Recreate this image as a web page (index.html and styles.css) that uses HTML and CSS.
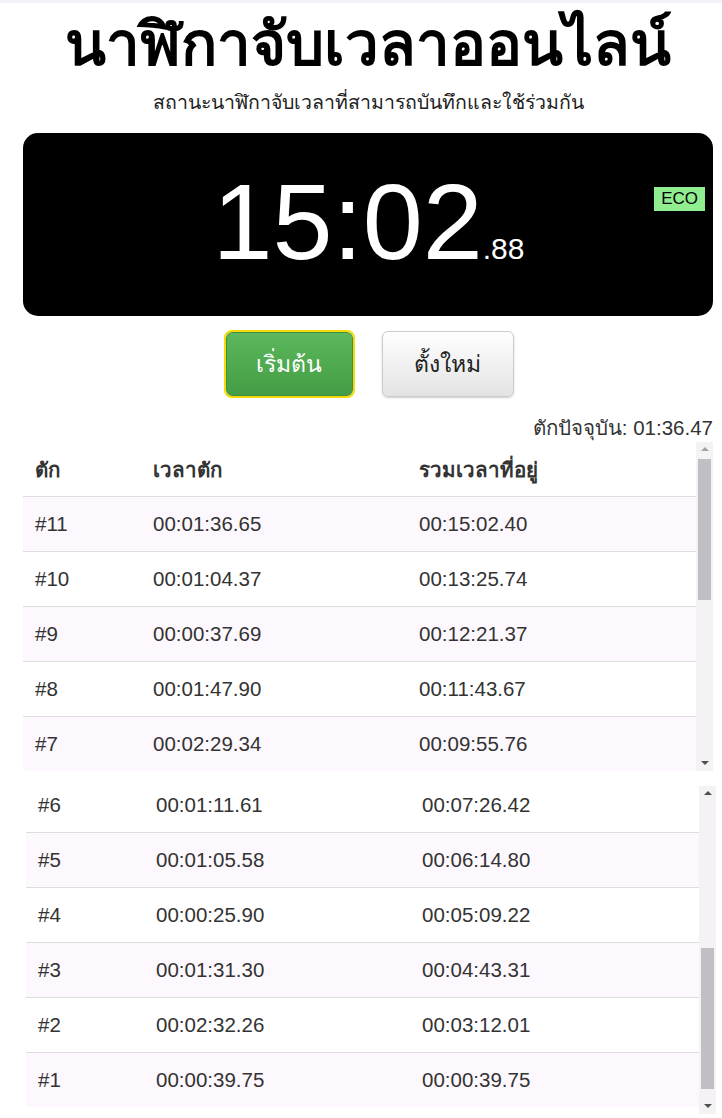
FILE: index.html
```html
<!DOCTYPE html>
<html lang="th">
<head>
    <meta charset="UTF-8">
    <meta name="viewport" content="width=device-width, initial-scale=1.0">
    <title>นาฬิกาจับเวลาออนไลน์</title>
    <link rel="stylesheet" href="styles.css">
</head>
<body>
    <div class="topbar"></div>
    <div class="page">
        <h1>นาฬิกาจับเวลาออนไลน์</h1>
        <p class="subtitle">สถานะนาฬิกาจับเวลาที่สามารถบันทึกและใช้ร่วมกัน</p>

        <div class="clock">
            <span class="time">15:02</span><span class="ms">.88</span>
            <span class="eco">ECO</span>
        </div>

        <div class="controls">
            <button class="btn btn-start">เริ่มต้น</button>
            <button class="btn btn-reset">ตั้งใหม่</button>
        </div>

        <div class="current-lap">ตักปัจจุบัน: 01:36.47</div>

        <div class="laps">
            <div class="laps-view" id="lapsTop"></div>
            <div class="scrollbar">
                <div class="arrow arrow-up"></div>
                <div class="track"><div class="thumb thumb-top"></div></div>
                <div class="arrow arrow-down"></div>
            </div>
        </div>

        <div class="laps laps-bottom">
            <div class="laps-view" id="lapsBottom"></div>
            <div class="scrollbar">
                <div class="arrow arrow-up"></div>
                <div class="track"><div class="thumb thumb-bottom"></div></div>
                <div class="arrow arrow-down"></div>
            </div>
        </div>
    </div>

    <script>
        const laps = [
            ['#11', '00:01:36.65', '00:15:02.40'],
            ['#10', '00:01:04.37', '00:13:25.74'],
            ['#9', '00:00:37.69', '00:12:21.37'],
            ['#8', '00:01:47.90', '00:11:43.67'],
            ['#7', '00:02:29.34', '00:09:55.76'],
            ['#6', '00:01:11.61', '00:07:26.42'],
            ['#5', '00:01:05.58', '00:06:14.80'],
            ['#4', '00:00:25.90', '00:05:09.22'],
            ['#3', '00:01:31.30', '00:04:43.31'],
            ['#2', '00:02:32.26', '00:03:12.01'],
            ['#1', '00:00:39.75', '00:00:39.75']
        ];

        function buildTable(box) {
            let html = '<table><thead><tr><th class="c1">ตัก</th><th class="c2">เวลาตัก</th><th>รวมเวลาที่อยู่</th></tr></thead><tbody>';
            laps.forEach(function (lap) {
                html += '<tr><td>' + lap[0] + '</td><td>' + lap[1] + '</td><td>' + lap[2] + '</td></tr>';
            });
            html += '</tbody></table>';
            box.innerHTML = html;
        }

        buildTable(document.getElementById('lapsTop'));
        const bottom = document.getElementById('lapsBottom');
        buildTable(bottom);
        bottom.scrollTop = bottom.scrollHeight; // show the oldest laps
    </script>
</body>
</html>
```

FILE: styles.css
```css
body {
    font-family: "Liberation Sans", Arial, sans-serif;
    color: #333;
    background: #fff;
    margin: 0;
}

.topbar {
    height: 3px;
    background-color: #f3f1f5;
}

.page {
    padding: 0 9px 0 23px;
}

h1 {
    font-size: 60px;
    font-weight: bold;
    color: #000;
    text-align: center;
    margin: 2px 0 0;
    line-height: 80px;
}

.subtitle {
    text-align: center;
    font-size: 19.5px;
    color: #222;
    margin: 2px 0 15px;
}

/* Clock face */
.clock {
    position: relative;
    background-color: #000;
    color: #fff;
    border-radius: 15px;
    height: 183px;
    display: flex;
    justify-content: center;
    align-items: baseline;
}

.time {
    font-size: 108px;
    line-height: 178px;
    margin-left: 1px;
}

.ms {
    font-size: 30px;
}

.eco {
    position: absolute;
    top: 54px;
    right: 8px;
    background-color: #90ee90;
    color: #000;
    font-size: 17px;
    line-height: 24px;
    padding: 0 7px;
}

/* Buttons */
.controls {
    display: flex;
    justify-content: center;
    gap: 29px;
    margin-top: 15px;
    padding-left: 3px;
}

.btn {
    width: 132px;
    height: 66px;
    border-radius: 6px;
    font-family: inherit;
    font-size: 23px;
    cursor: pointer;
}

.btn-start {
    color: #fff;
    background: linear-gradient(#5cb85c, #449d44);
    border: 1px solid #3e8f3e;
    outline: 2px solid #f5d90a;
    width: 127px;
    height: 64px;
    margin-top: 1px;
}

.btn-reset {
    color: #222;
    background: linear-gradient(#fff, #e3e3e3);
    border: 1px solid #ccc;
    box-shadow: 0 1px 2px rgba(0, 0, 0, 0.2);
}

.current-lap {
    text-align: right;
    font-size: 20.5px;
    margin: 19px 0 2px;
    line-height: 24px;
}

/* Lap tables */
.laps {
    display: flex;
    height: 329px;
}

.laps-bottom {
    height: 328px;
    margin: 15px -3px 0 3px;
}

.laps-view {
    flex: 1;
    overflow: hidden;
}

table {
    width: 100%;
    border-collapse: collapse;
    font-size: 20.5px;
    margin-bottom: 7px;
}

th, td {
    text-align: left;
    padding: 0 12px;
    height: 54px;
}

td {
    border-top: 1px solid #ddd;
}

th.c1 {
    width: 94px;
}

th.c2 {
    width: 242px;
}

tbody tr:nth-child(odd) {
    background-color: #fdf8fd;
}

/* Scrollbar drawn beside the table */
.scrollbar {
    width: 17px;
    display: flex;
    flex-direction: column;
    background-color: #f5f2f5;
}

.arrow {
    height: 15px;
    position: relative;
}

.arrow::after {
    content: "";
    position: absolute;
    left: 5px;
    top: 5px;
    border-left: 4px solid transparent;
    border-right: 4px solid transparent;
}

.arrow-up::after {
    border-bottom: 4px solid #a3a3a3;
}

.arrow-down::after {
    border-top: 4px solid #505050;
}

.track {
    flex: 1;
    display: flex;
    flex-direction: column;
}

.thumb {
    height: 141px;
    margin: 0 2px;
    background-color: #c1bfc3;
}

.thumb-top {
    margin-top: 2px;
}

.thumb-bottom {
    margin-top: auto;
    margin-bottom: 10px;
}

.laps-bottom .arrow-up::after {
    border-bottom-color: #505050;
}
```
